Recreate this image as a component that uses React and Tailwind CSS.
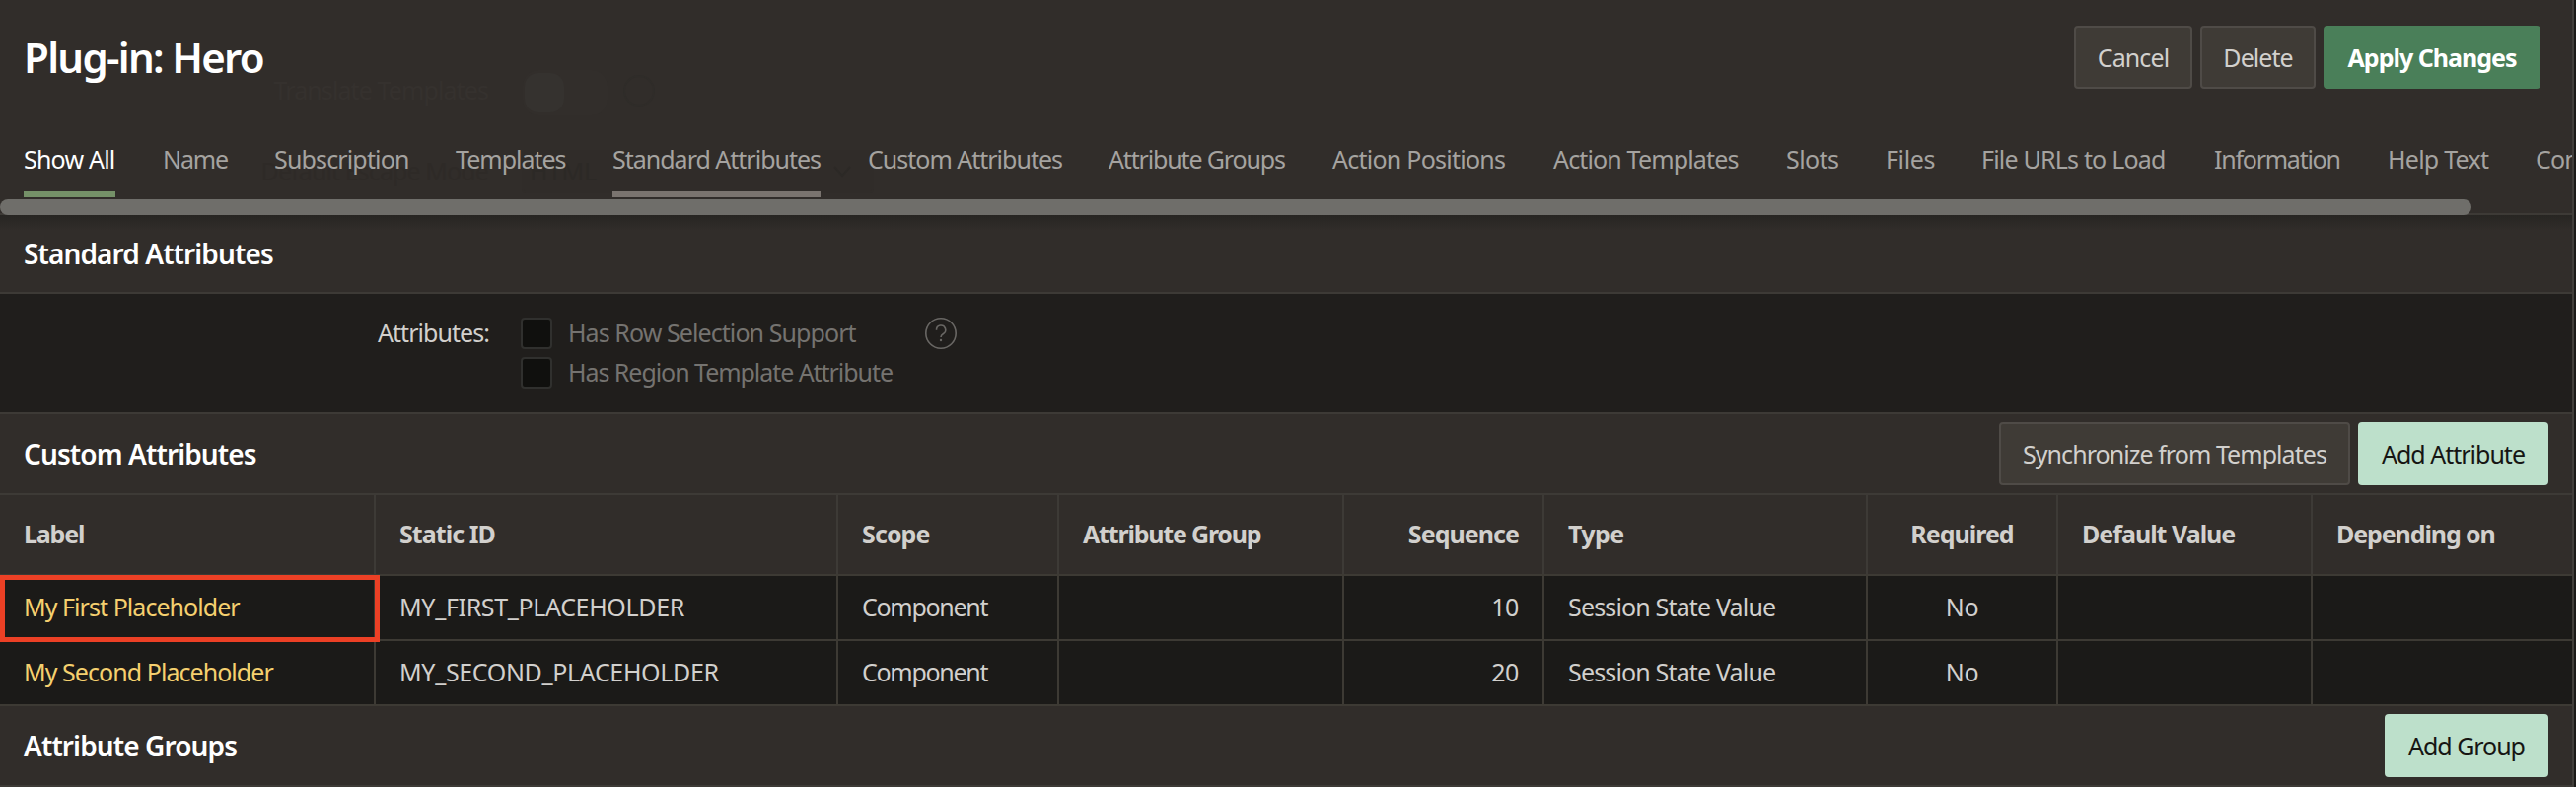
import React from "react";

const tabs = [
  ["Show All", "w-[93px] tracking-[-0.8px] text-white border-[#759168]"],
  ["Name", "w-[65px] tracking-[-1.1px] border-transparent"],
  ["Subscription", "w-[136px] tracking-[-0.85px] border-transparent"],
  ["Templates", "w-[111px] tracking-[-1px] border-transparent"],
  ["Standard Attributes", "w-[211px] tracking-[-1px] border-[#7a746f]"],
  ["Custom Attributes", "w-[196px] tracking-[-1px] border-transparent"],
  ["Attribute Groups", "w-[179px] tracking-[-1.15px] border-transparent"],
  ["Action Positions", "w-[176px] tracking-[-0.75px] border-transparent"],
  ["Action Templates", "w-[188px] tracking-[-0.85px] border-transparent"],
  ["Slots", "w-[53px] tracking-[-0.6px] border-transparent"],
  ["Files", "w-[49px] tracking-[-0.4px] border-transparent"],
  ["File URLs to Load", "w-[188px] tracking-[-0.8px] border-transparent"],
  ["Information", "w-[128px] tracking-[-1.25px] border-transparent"],
  ["Help Text", "w-[102px] tracking-[-0.75px] border-transparent"],
  ["Comments", "tracking-[-0.8px] border-transparent"],
];

const columns = [
  { name: "Label", cls: "w-[381px] text-left", head: "tracking-[-1.2px]", body: "tracking-[-0.95px] text-[#f5d06f]" },
  { name: "Static ID", cls: "w-[469px] text-left", head: "tracking-[-0.95px]", body: "tracking-[-0.35px]" },
  { name: "Scope", cls: "w-[224px] text-left", head: "tracking-[-0.9px]", body: "tracking-[-1.3px]" },
  { name: "Attribute Group", cls: "w-[289px] text-left", head: "tracking-[-1.2px]", body: "" },
  { name: "Sequence", cls: "w-[203px] text-right", head: "tracking-[-0.95px]", body: "tracking-[-0.4px]" },
  { name: "Type", cls: "w-[328px] text-left", head: "tracking-[-0.6px]", body: "tracking-[-0.84px]" },
  { name: "Required", cls: "w-[193px] text-center", head: "tracking-[-1px]", body: "tracking-[-0.4px]" },
  { name: "Default Value", cls: "w-[258px] text-left", head: "tracking-[-1px]", body: "" },
  { name: "Depending on", cls: "w-[265px] text-left", head: "tracking-[-1.1px]", body: "" },
];

const rows = [
  ["My First Placeholder", "MY_FIRST_PLACEHOLDER", "Component", "", "10", "Session State Value", "No", "", ""],
  ["My Second Placeholder", "MY_SECOND_PLACEHOLDER", "Component", "", "20", "Session State Value", "No", "", ""],
];

const neutral = "border-2 border-[#4f4b47] bg-[#3f3b36] ";
const mint = "bg-[#bde0cb] text-[#161513] ";

function Button({ className = "", children }) {
  return (
    <button className={"h-16 shrink-0 rounded-[4px] pb-px whitespace-nowrap text-center " + className}>
      {children}
    </button>
  );
}

function SectionHeader({ title, className, children }) {
  return (
    <header className={"flex shrink-0 items-center border-b-2 border-[#3d3a36] pl-6 pr-6 " + className}>
      <h2 className="flex-1 text-[28px] font-semibold tracking-[-0.9px] text-white">{title}</h2>
      <div className="flex gap-2">{children}</div>
    </header>
  );
}

function Checkbox({ label, className }) {
  return (
    <label className="flex h-10 items-center">
      <span className="h-8 w-8 rounded-[4px] border-2 border-[#30302e] bg-[#10100e]" />
      <span className={"ml-4 pb-0.5 whitespace-nowrap text-[#757370] " + className}>{label}</span>
    </label>
  );
}

/* Form content that shows faintly through the translucent sticky header */
function HeaderShowThrough() {
  return (
    <div className="pointer-events-none absolute left-0 top-0 h-[202px] w-[900px] text-[#2e2a27]" aria-hidden="true">
      <div className="absolute right-[405px] top-[75px] whitespace-nowrap tracking-[-0.9px] text-[#35312e]">Translate Templates</div>
      <div className="absolute left-[530px] top-[71px] h-[46px] w-[86px] rounded-[16px] bg-[#322e2b]" />
      <div className="absolute left-[532px] top-[74px] h-10 w-10 rounded-[14px] bg-[#35322f]" />
      <div className="absolute left-[632px] top-[76px] h-8 w-8 rounded-full border-2 border-[#2f2c29]" />
      <div className="absolute right-[405px] top-[157px] whitespace-nowrap tracking-[-0.9px]">Default Escape Mode</div>
      <div className="absolute left-[529px] top-[152px] h-[44px] w-[357px] rounded-[4px] border-2 border-[#302c29] bg-[#302c29]" />
      <div className="absolute left-[537px] top-[157px] text-[#2c2926]">HTML</div>
      <svg className="absolute left-[845px] top-[168px] h-3 w-[18px]" viewBox="0 0 18 12" fill="none" stroke="#2c2926" strokeWidth="2">
        <path d="M1 1l8 9 8-9" />
      </svg>
    </div>
  );
}

export default function App() {
  return (
    <div className="relative flex h-[798px] w-[2612px] overflow-hidden bg-[#312d2a] font-['Noto_Sans',sans-serif] text-[25px] leading-[32px] text-[#d2d0cd]">
      <HeaderShowThrough />
      <main className="relative flex w-[2608px] shrink-0 flex-col overflow-hidden">
        <div className="flex h-[120px] shrink-0 items-start justify-between pl-6 pr-8">
          <h1 className="mt-8 text-[42px] font-semibold leading-[52px] tracking-[-1.7px] text-white">Plug-in: Hero</h1>
          <div className="mt-[26px] flex gap-2">
            <Button className={neutral + "w-[120px] tracking-[-0.9px]"}>Cancel</Button>
            <Button className={neutral + "w-[117px] tracking-[-0.95px]"}>Delete</Button>
            <Button className="w-[220px] bg-[#4a7f59] font-bold tracking-[-1px] text-white">Apply Changes</Button>
          </div>
        </div>
        <nav className="flex h-[82px] shrink-0 gap-12 overflow-hidden pl-6 text-[#a5a3a0]">
          {tabs.map(([name, cls]) => (
            <a key={name} className={"flex h-20 shrink-0 items-center border-b-[6px] pt-2 whitespace-nowrap " + cls}>
              <span>{name}</span>
            </a>
          ))}
        </nav>
        <div className="flex h-4 shrink-0 items-stretch border-b-2 border-[#3d3a36]">
          <div className="-mb-0.5 w-[2506px] rounded-full bg-[#6f6e6a]" />
        </div>
        <SectionHeader title="Standard Attributes" className="h-[80px] bg-linear-to-b from-[#272522] from-0% to-[#312d2a] to-20%" />
        <section className="flex h-[122px] shrink-0 border-b-2 border-[#3d3a36] bg-[#201e1c] pt-5">
          <div className="w-[496px] pt-[3px] text-right tracking-[-0.95px]">Attributes:</div>
          <div className="ml-8 w-[410px]">
            <Checkbox label="Has Row Selection Support" className="tracking-[-0.92px]" />
            <Checkbox label="Has Region Template Attribute" className="tracking-[-1.05px]" />
          </div>
          <svg className="mt-1 h-8 w-8" viewBox="0 0 32 32" fill="none" stroke="#696764">
            <circle cx="16" cy="16" r="15.200" strokeWidth="1.600" />
            <path d="M11.500 12.700a4.600 4.600 0 1 1 7 3.800c-1.600 1-2.500 1.800-2.500 3.500" strokeWidth="1.600" />
            <circle cx="16" cy="23" r="1.200" fill="#696764" stroke="none" />
          </svg>
        </section>
        <SectionHeader title="Custom Attributes" className="h-[82px]">
          <Button className={neutral + "w-[356px] tracking-[-0.95px]"}>Synchronize from Templates</Button>
          <Button className={mint + "w-[193px] tracking-[-1px]"}>Add Attribute</Button>
        </SectionHeader>
        <div className="flex h-[82px] shrink-0 border-b-2 border-[#3d3a34] font-bold">
          {columns.map((col) => (
            <div key={col.name} className={"shrink-0 border-r-2 border-[#3d3a36] px-6 pt-[23px] last:border-r-0 " + col.cls}>
              <span className={col.head}>{col.name}</span>
            </div>
          ))}
        </div>
        {rows.map((row, r) => (
          <div key={r} className="flex h-[66px] shrink-0 border-b-2 border-[#3d3a34] bg-[#1b1a18]">
            {row.map((cell, c) => (
              <div key={c} className={"relative shrink-0 border-r-2 border-[#3d3a34] px-6 pt-[15px] whitespace-nowrap last:border-r-0 " + columns[c].cls}>
                <span className={columns[c].body}>{cell}</span>
                {r === 0 && c === 0 && <div className="absolute -top-px left-0 z-10 h-[68px] w-[385px] border-[5px] border-[#ec4025]" />}
              </div>
            ))}
          </div>
        ))}
        <SectionHeader title="Attribute Groups" className="h-[82px]">
          <Button className={mint + "w-[166px] tracking-[-1.05px]"}>Add Group</Button>
        </SectionHeader>
      </main>
      <div className="w-1 border-l-2 border-[#413e3a] bg-[#1b1a18]" />
    </div>
  );
}
